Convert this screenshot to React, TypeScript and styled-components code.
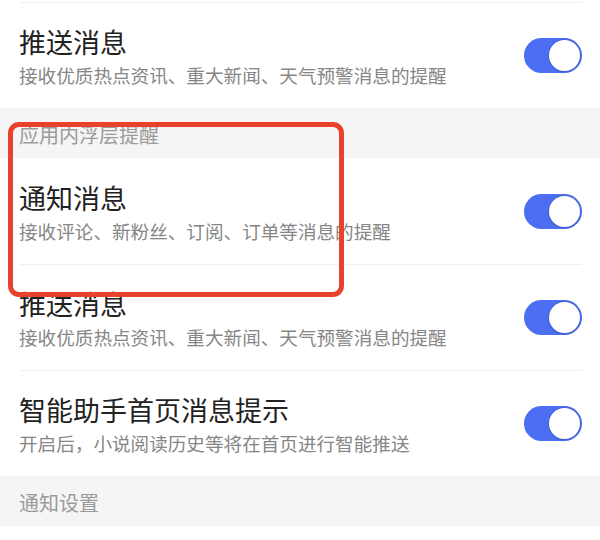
import React from 'react'
import styled, { createGlobalStyle } from 'styled-components'

const GlobalStyle = createGlobalStyle`
  html, body {
    margin: 0;
    padding: 0;
    background: #ffffff;
  }
  body {
    font-family: "Noto Sans CJK SC", "Noto Sans", sans-serif;
    -webkit-font-smoothing: antialiased;
  }
`

const Page = styled.div`
  position: relative;
  width: 600px;
  height: 540px;
  overflow: hidden;
  background: #ffffff;
  padding-top: 2px;
  box-sizing: border-box;
`

const Group = styled.div`
  background: #ffffff;
`

const SectionHeader = styled.div`
  height: 50px;
  box-sizing: border-box;
  padding: 13px 19px 0;
  background: #f5f5f5;
  color: #9b9b9b;
  font-size: 20px;
  line-height: 28px;
`

const Row = styled.div<{ $divider?: boolean }>`
  height: 106px;
  box-sizing: border-box;
  display: flex;
  align-items: flex-start;
  padding: 24px 18px 0 19px;
  position: relative;

  &::before {
    content: '';
    display: ${({ $divider }) => ($divider ? 'block' : 'none')};
    position: absolute;
    top: 0;
    left: 20px;
    right: 18px;
    height: 1px;
    background: #f0f0f0;
  }
`

const TextBlock = styled.div`
  flex: 1;
  display: flex;
  flex-direction: column;
`

const Title = styled.div`
  font-size: 27px;
  line-height: 32px;
  color: #222222;
`

const Subtitle = styled.div`
  margin-top: 2px;
  font-size: 18.6px;
  line-height: 30px;
  color: #868686;
`

const Track = styled.div<{ $on: boolean }>`
  flex: none;
  align-self: center;
  margin-top: -24px;
  width: 58px;
  height: 35px;
  border-radius: 18px;
  background: ${({ $on }) => ($on ? '#4b6ef2' : '#d9d9d9')};
  display: flex;
  align-items: center;
  justify-content: ${({ $on }) => ($on ? 'flex-end' : 'flex-start')};
  padding: 0 2px;
  box-sizing: border-box;
`

const Knob = styled.div`
  width: 31px;
  height: 31px;
  border-radius: 50%;
  background: #ffffff;
  box-shadow: 0 0 0 1px rgba(60, 80, 160, 0.25), 0 1px 2px rgba(0, 0, 0, 0.15);
`

const Highlight = styled.div`
  position: absolute;
  left: 8px;
  top: 122px;
  width: 336px;
  height: 175px;
  box-sizing: border-box;
  border: 5px solid #e8422d;
  border-radius: 11px;
  pointer-events: none;
`

interface ToggleProps {
  on: boolean
}

const Toggle: React.FC<ToggleProps> = ({ on }) => (
  <Track $on={on}>
    <Knob />
  </Track>
)

interface SettingProps {
  title: string
  desc: string
  divider?: boolean
}

const SettingRow: React.FC<SettingProps> = ({ title, desc, divider }) => (
  <Row $divider={divider}>
    <TextBlock>
      <Title>{title}</Title>
      <Subtitle>{desc}</Subtitle>
    </TextBlock>
    <Toggle on />
  </Row>
)

const PUSH_DESC = '接收优质热点资讯、重大新闻、天气预警消息的提醒'

const App: React.FC = () => (
  <>
    <GlobalStyle />
    <Page>
      <Group>
        <SettingRow title="推送消息" desc={PUSH_DESC} divider />
      </Group>
      <SectionHeader>应用内浮层提醒</SectionHeader>
      <Group>
        <SettingRow title="通知消息" desc="接收评论、新粉丝、订阅、订单等消息的提醒" />
        <SettingRow title="推送消息" desc={PUSH_DESC} divider />
        <SettingRow title="智能助手首页消息提示" desc="开启后，小说阅读历史等将在首页进行智能推送" divider />
      </Group>
      <SectionHeader>通知设置</SectionHeader>
      <Highlight />
    </Page>
  </>
)

export default App
